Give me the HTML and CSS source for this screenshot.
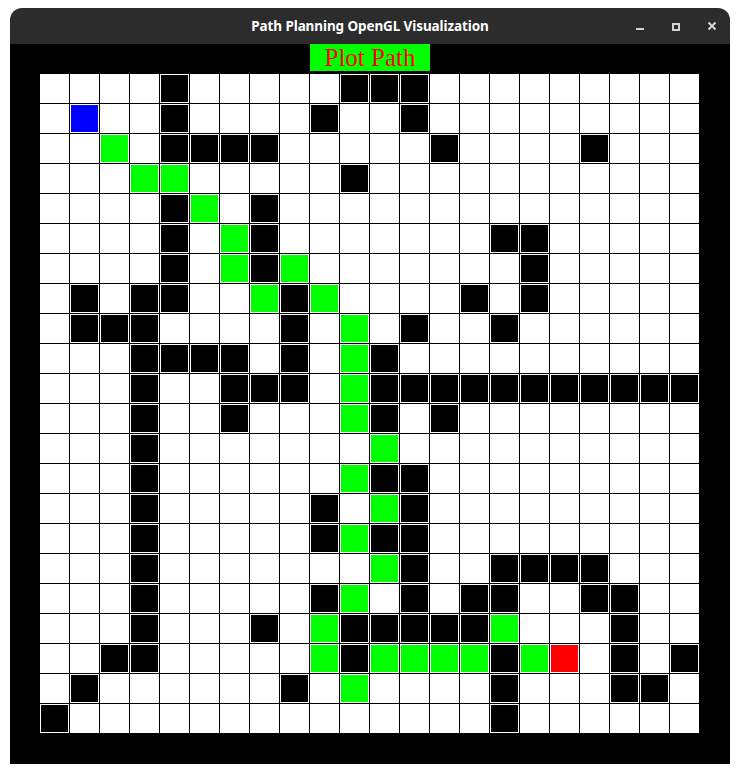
FILE: index.html
```html
<!DOCTYPE html>
<html lang="en">
<head>
<meta charset="utf-8">
<title>Path Planning OpenGL Visualization</title>
<link rel="stylesheet" href="styles.css">
</head>
<body>
<div class="window">
  <header class="titlebar">
    <div class="spacer"></div>
    <div class="title">Path Planning OpenGL Visualization</div>
    <div class="controls">
      <span class="ctl"><svg width="16" height="16" viewBox="0 0 16 16"><rect x="4" y="10" width="8" height="2" fill="#d4d4d4"/></svg></span>
      <span class="ctl"><svg width="16" height="16" viewBox="0 0 16 16"><rect x="5" y="6" width="6" height="6" fill="none" stroke="#d4d4d4" stroke-width="2"/></svg></span>
      <span class="ctl"><svg width="16" height="16" viewBox="0 0 16 16"><path d="M4.5 4.5 L11.5 11.5 M11.5 4.5 L4.5 11.5" stroke="#d4d4d4" stroke-width="2"/></svg></span>
    </div>
  </header>
  <main class="canvas">
    <div class="plot-btn">Plot Path</div>
    <div class="board">
      <!-- row 0 -->
      <i></i><i></i><i></i><i></i><i class="b"></i><i></i><i></i><i></i><i></i><i></i><i class="b"></i><i class="b"></i><i class="b"></i><i></i><i></i><i></i><i></i><i></i><i></i><i></i><i></i><i></i>
      <!-- row 1 -->
      <i></i><i class="s"></i><i></i><i></i><i class="b"></i><i></i><i></i><i></i><i></i><i class="b"></i><i></i><i></i><i class="b"></i><i></i><i></i><i></i><i></i><i></i><i></i><i></i><i></i><i></i>
      <!-- row 2 -->
      <i></i><i></i><i class="g"></i><i></i><i class="b"></i><i class="b"></i><i class="b"></i><i class="b"></i><i></i><i></i><i></i><i></i><i></i><i class="b"></i><i></i><i></i><i></i><i></i><i class="b"></i><i></i><i></i><i></i>
      <!-- row 3 -->
      <i></i><i></i><i></i><i class="g"></i><i class="g"></i><i></i><i></i><i></i><i></i><i></i><i class="b"></i><i></i><i></i><i></i><i></i><i></i><i></i><i></i><i></i><i></i><i></i><i></i>
      <!-- row 4 -->
      <i></i><i></i><i></i><i></i><i class="b"></i><i class="g"></i><i></i><i class="b"></i><i></i><i></i><i></i><i></i><i></i><i></i><i></i><i></i><i></i><i></i><i></i><i></i><i></i><i></i>
      <!-- row 5 -->
      <i></i><i></i><i></i><i></i><i class="b"></i><i></i><i class="g"></i><i class="b"></i><i></i><i></i><i></i><i></i><i></i><i></i><i></i><i class="b"></i><i class="b"></i><i></i><i></i><i></i><i></i><i></i>
      <!-- row 6 -->
      <i></i><i></i><i></i><i></i><i class="b"></i><i></i><i class="g"></i><i class="b"></i><i class="g"></i><i></i><i></i><i></i><i></i><i></i><i></i><i></i><i class="b"></i><i></i><i></i><i></i><i></i><i></i>
      <!-- row 7 -->
      <i></i><i class="b"></i><i></i><i class="b"></i><i class="b"></i><i></i><i></i><i class="g"></i><i class="b"></i><i class="g"></i><i></i><i></i><i></i><i></i><i class="b"></i><i></i><i class="b"></i><i></i><i></i><i></i><i></i><i></i>
      <!-- row 8 -->
      <i></i><i class="b"></i><i class="b"></i><i class="b"></i><i></i><i></i><i></i><i></i><i class="b"></i><i></i><i class="g"></i><i></i><i class="b"></i><i></i><i></i><i class="b"></i><i></i><i></i><i></i><i></i><i></i><i></i>
      <!-- row 9 -->
      <i></i><i></i><i></i><i class="b"></i><i class="b"></i><i class="b"></i><i class="b"></i><i></i><i class="b"></i><i></i><i class="g"></i><i class="b"></i><i></i><i></i><i></i><i></i><i></i><i></i><i></i><i></i><i></i><i></i>
      <!-- row 10 -->
      <i></i><i></i><i></i><i class="b"></i><i></i><i></i><i class="b"></i><i class="b"></i><i class="b"></i><i></i><i class="g"></i><i class="b"></i><i class="b"></i><i class="b"></i><i class="b"></i><i class="b"></i><i class="b"></i><i class="b"></i><i class="b"></i><i class="b"></i><i class="b"></i><i class="b"></i>
      <!-- row 11 -->
      <i></i><i></i><i></i><i class="b"></i><i></i><i></i><i class="b"></i><i></i><i></i><i></i><i class="g"></i><i class="b"></i><i></i><i class="b"></i><i></i><i></i><i></i><i></i><i></i><i></i><i></i><i></i>
      <!-- row 12 -->
      <i></i><i></i><i></i><i class="b"></i><i></i><i></i><i></i><i></i><i></i><i></i><i></i><i class="g"></i><i></i><i></i><i></i><i></i><i></i><i></i><i></i><i></i><i></i><i></i>
      <!-- row 13 -->
      <i></i><i></i><i></i><i class="b"></i><i></i><i></i><i></i><i></i><i></i><i></i><i class="g"></i><i class="b"></i><i class="b"></i><i></i><i></i><i></i><i></i><i></i><i></i><i></i><i></i><i></i>
      <!-- row 14 -->
      <i></i><i></i><i></i><i class="b"></i><i></i><i></i><i></i><i></i><i></i><i class="b"></i><i></i><i class="g"></i><i class="b"></i><i></i><i></i><i></i><i></i><i></i><i></i><i></i><i></i><i></i>
      <!-- row 15 -->
      <i></i><i></i><i></i><i class="b"></i><i></i><i></i><i></i><i></i><i></i><i class="b"></i><i class="g"></i><i class="b"></i><i class="b"></i><i></i><i></i><i></i><i></i><i></i><i></i><i></i><i></i><i></i>
      <!-- row 16 -->
      <i></i><i></i><i></i><i class="b"></i><i></i><i></i><i></i><i></i><i></i><i></i><i></i><i class="g"></i><i class="b"></i><i></i><i></i><i class="b"></i><i class="b"></i><i class="b"></i><i class="b"></i><i></i><i></i><i></i>
      <!-- row 17 -->
      <i></i><i></i><i></i><i class="b"></i><i></i><i></i><i></i><i></i><i></i><i class="b"></i><i class="g"></i><i></i><i class="b"></i><i></i><i class="b"></i><i class="b"></i><i></i><i></i><i class="b"></i><i class="b"></i><i></i><i></i>
      <!-- row 18 -->
      <i></i><i></i><i></i><i class="b"></i><i></i><i></i><i></i><i class="b"></i><i></i><i class="g"></i><i class="b"></i><i class="b"></i><i class="b"></i><i class="b"></i><i class="b"></i><i class="g"></i><i></i><i></i><i></i><i class="b"></i><i></i><i></i>
      <!-- row 19 -->
      <i></i><i></i><i class="b"></i><i class="b"></i><i></i><i></i><i></i><i></i><i></i><i class="g"></i><i class="b"></i><i class="g"></i><i class="g"></i><i class="g"></i><i class="g"></i><i class="b"></i><i class="g"></i><i class="e"></i><i></i><i class="b"></i><i></i><i class="b"></i>
      <!-- row 20 -->
      <i></i><i class="b"></i><i></i><i></i><i></i><i></i><i></i><i></i><i class="b"></i><i></i><i class="g"></i><i></i><i></i><i></i><i></i><i class="b"></i><i></i><i></i><i></i><i class="b"></i><i class="b"></i><i></i>
      <!-- row 21 -->
      <i class="b"></i><i></i><i></i><i></i><i></i><i></i><i></i><i></i><i></i><i></i><i></i><i></i><i></i><i></i><i></i><i class="b"></i><i></i><i></i><i></i><i></i><i></i><i></i>
    </div>
  </main>
</div>
</body>
</html>
```
FILE: styles.css
```css
* { box-sizing: border-box; }

html, body {
  margin: 0;
  padding: 0;
  background: #ffffff;
}

.window {
  margin: 8px 10px 10px 10px;
  width: 720px;
  border-radius: 12px 12px 0 0;
  overflow: hidden;
}

.titlebar {
  height: 36px;
  background: #2c2c2c;
  display: grid;
  grid-template-columns: 1fr auto 1fr;
  align-items: center;
}

.title {
  color: #ffffff;
  font-family: "Noto Sans", "Open Sans", sans-serif;
  font-weight: 700;
  font-size: 13.5px;
  letter-spacing: -0.1px;
}

.controls {
  display: flex;
  justify-content: flex-end;
  height: 100%;
}

.ctl {
  width: 36px;
  height: 36px;
  display: flex;
  align-items: center;
  justify-content: center;
}

.ctl svg { display: block; }

.canvas {
  background: #000000;
  height: 720px;
  display: flex;
  flex-direction: column;
  align-items: center;
}

.plot-btn {
  width: 120px;
  height: 27px;
  background: #00ff00;
  color: #ff0000;
  font-family: "Liberation Serif", "Times New Roman", serif;
  font-size: 25px;
  line-height: 27px;
  text-align: center;
}

.board {
  margin-top: 3px;
  display: grid;
  grid-template-columns: repeat(22, 30px);
  grid-auto-rows: 30px;
}

.board i {
  display: block;
  background: #ffffff;
  border-right: 1px solid #000000;
  border-bottom: 1px solid #000000;
}

.board i.b,
.board i.g,
.board i.s,
.board i.e {
  box-shadow: inset 0 0 0 1px #ffffff;
}

.board i.b { background: #000000; }
.board i.g { background: #00ff00; }
.board i.s { background: #0000ff; }
.board i.e { background: #ff0000; }
```
